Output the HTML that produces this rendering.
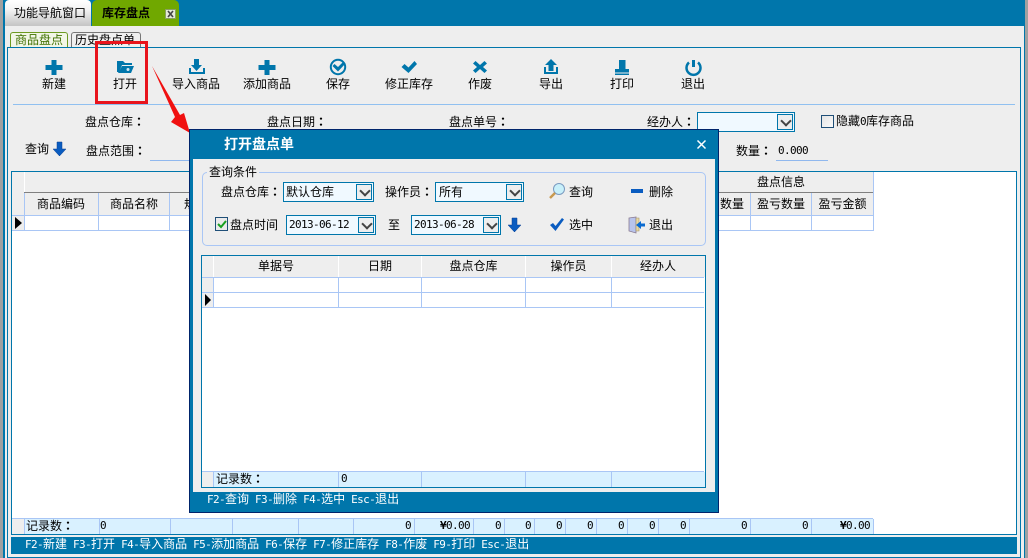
<!DOCTYPE html>
<html><head><meta charset="utf-8"><style>
html,body{margin:0;padding:0;width:1028px;height:558px;overflow:hidden;background:#eee}
*{box-sizing:border-box}
body{position:relative;font:12px/12px "WenQuanYi Zen Hei","Noto Sans CJK SC",sans-serif;color:#000}
div,svg{position:absolute}
.t{white-space:pre;height:12px}
.c{text-align:center}
.r{text-align:right}
.g{background:#a9c6f5}
.bl{background:#0076ab}
.w{color:#fff}
.m{font:11px/12px "DejaVu Sans Mono","Liberation Mono",monospace;letter-spacing:-.62px}
.k{font-family:"Noto Sans CJK TC","WenQuanYi Zen Hei",sans-serif;font-weight:bold}
.cb{border:1px solid #0076ab;background:#f0f9ff;height:20px}
.bt{right:1px;top:1px;width:16px;height:16px;background:#eee;border:1px solid #0076ab}
.bt::after{content:"";position:absolute;left:4px;top:2px;width:6px;height:6px;border:solid #444;border-width:0 2px 2px 0;transform:rotate(45deg)}
</style></head><body>
<div style="left:0;top:0;width:3px;height:558px;background:#a0a0a0"></div>
<div style="left:1025px;top:0;width:3px;height:558px;background:#a0a0a0"></div>
<div class="bl" style="left:3px;top:0;width:1022px;height:26px"></div>
<div class="bl" style="left:3px;top:0;width:2px;height:558px"></div>
<div class="bl" style="left:1024px;top:0;width:1px;height:558px"></div>
<div style="left:5px;top:0;width:86px;height:26px;background:linear-gradient(#fff,#f4f4f4 35%,#c4c4c4);border-radius:4px 4px 0 0"></div>
<div class="t" style="left:14px;top:7px">功能导航窗口</div>
<div style="left:92px;top:0;width:87px;height:26px;background:#70a800;border-radius:5px 5px 0 0"></div>
<div class="t" style="left:102px;top:7px;font-weight:bold">库存盘点</div>
<div style="left:165px;top:9px;width:11px;height:10px;background:#e4ead8;border:1px solid #8aa060"></div>
<svg style="left:165px;top:9px" width="11" height="10"><path d="M3 2L8 8M8 2L3 8" stroke="#444" stroke-width="1.6"/></svg>

<div style="left:10px;top:32px;width:58px;height:16px;background:#f2f6e6;border:1px solid #6c9a20;border-bottom:0;border-radius:3px 3px 0 0"></div>
<div class="t" style="left:15px;top:34px;color:#3f7000">商品盘点</div>
<div style="left:71px;top:32px;width:70px;height:15px;background:#f0f0f0;border:1px solid #777;border-bottom:0;border-radius:3px 3px 0 0"></div>
<div class="t" style="left:75px;top:34px">历史盘点单</div>

<div style="left:7px;top:47px;width:1014px;height:511px;border:1px solid #0076ab"></div>
<div style="left:13px;top:104px;width:1002px;height:1px;background:#90c0f0"></div>

<svg style="left:0;top:0" width="1028" height="110" fill="#0076ab">
<path d="M51.500 60h5v5h6v5h-6v5h-5v-5h-6v-5h6z"/>
<path d="M117 63v-2h6l2 2h7v2h-10l-3 7h-2z"/><path d="M122 66h12l-3 7h-13z"/><circle cx="128" cy="69.500" r="1.500" fill="#cfe6f2"/>
<path d="M194 59h5v6h3l-5.500 6-5.500-6h3zM189 68h2v4h12v-4h2v6h-16z"/>
<path d="M264.500 60h5v5h6v5h-6v5h-5v-5h-6v-5h6z"/>
<circle cx="338" cy="67" r="7.200" fill="none" stroke="#0076ab" stroke-width="2"/><path d="M332.500 66l2-2 3.500 3 5.500-5.500 2 2-7.500 8z"/>
<path d="M401.500 67l3-3 4 3.500 6-6.500 2.500 3-8.500 9z"/>
<path d="M473 63.500l2.500-2.500 4.500 4 4.500-4 2.500 2.500-4 3.500 4 3.500-2.500 2.500-4.500-4-4.500 4-2.500-2.500 4-3.500z"/>
<path d="M551 59l6 6h-3.500v6h-5v-6h-3.500zM544 67h2v5h10v-5h2v7h-14z"/>
<path d="M619 60h6.500v9h-6.500zM615 69h14v3.500h-14zM615 73.500h14v1.500h-14z"/>
<path d="M692 60h3v7h-3z"/><path d="M689 62.500a7 7 0 1 0 9 0" fill="none" stroke="#0076ab" stroke-width="2.500"/>
</svg>
<div class="t c" style="left:34px;top:78px;width:40px">新建</div>
<div class="t c" style="left:105px;top:78px;width:40px">打开</div>
<div class="t c" style="left:166px;top:78px;width:60px">导入商品</div>
<div class="t c" style="left:237px;top:78px;width:60px">添加商品</div>
<div class="t c" style="left:318px;top:78px;width:40px">保存</div>
<div class="t c" style="left:379px;top:78px;width:60px">修正库存</div>
<div class="t c" style="left:460px;top:78px;width:40px">作废</div>
<div class="t c" style="left:531px;top:78px;width:40px">导出</div>
<div class="t c" style="left:602px;top:78px;width:40px">打印</div>
<div class="t c" style="left:673px;top:78px;width:40px">退出</div>

<div class="t" style="left:85px;top:116px">盘点仓库<span class="k">：</span></div>
<div class="t" style="left:267px;top:116px">盘点日期<span class="k">：</span></div>
<div class="t" style="left:449px;top:116px">盘点单号<span class="k">：</span></div>
<div class="t" style="left:647px;top:116px">经办人<span class="k">：</span></div>
<div class="cb" style="left:697px;top:112px;width:98px"><div class="bt"></div></div>
<div style="left:821px;top:115px;width:13px;height:13px;border:1px solid #1f4f78;background:linear-gradient(135deg,#e4e4e4,#fafafa)"></div>
<div class="t" style="left:836px;top:115px">隐藏<span class="m">0</span>库存商品</div>
<div class="t" style="left:25px;top:143px">查询</div>
<svg style="left:53px;top:141px" width="14" height="16"><path d="M4 1h5v7h4l-6.500 7L0 8h4z" fill="#0a5cc0" stroke="#0a3f90" stroke-width=".5"/></svg>
<div class="t" style="left:86px;top:145px">盘点范围<span class="k">：</span></div>
<div style="left:150px;top:160px;width:40px;height:1px;background:#90b8ee"></div>
<div class="t" style="left:736px;top:145px">数量<span class="k">：</span></div>
<div class="t m" style="left:778px;top:145px">0.000</div>
<div style="left:776px;top:160px;width:52px;height:1px;background:#90b8ee"></div>

<!-- main grid -->
<div style="left:11px;top:171px;width:1006px;height:364px;background:#fff;border:1px solid #0076ab"></div>
<div style="left:12px;top:172px;width:861px;height:43px;background:#eee"></div>
<div style="left:12px;top:172px;width:12px;height:58px;background:#eee"></div>
<div style="left:24px;top:172px;width:1px;height:43px;background:#fff"></div>
<div style="left:24px;top:192px;width:849px;height:1px;background:#808080"></div>
<div class="g" style="left:12px;top:215px;width:861px;height:1px"></div>
<div class="g" style="left:12px;top:230px;width:861px;height:1px"></div>
<div class="g" style="left:24px;top:193px;width:1px;height:38px"></div>
<div class="g" style="left:98px;top:193px;width:1px;height:38px"></div>
<div class="g" style="left:169px;top:193px;width:1px;height:38px"></div>
<div class="g" style="left:750px;top:193px;width:1px;height:38px"></div>
<div class="g" style="left:811px;top:193px;width:1px;height:38px"></div>
<div class="g" style="left:873px;top:172px;width:1px;height:59px"></div>
<svg style="left:15px;top:216px" width="8" height="14"><path d="M0 1l7 6-7 6z"/></svg>
<div class="t c" style="left:24px;top:198px;width:74px">商品编码</div>
<div class="t c" style="left:99px;top:198px;width:70px">商品名称</div>
<div class="t" style="left:184px;top:198px">规格</div>
<div class="t c" style="left:689px;top:176px;width:184px">盘点信息</div>
<div class="t" style="left:720px;top:198px">数量</div>
<div class="t c" style="left:751px;top:198px;width:60px">盈亏数量</div>
<div class="t c" style="left:812px;top:198px;width:61px">盈亏金额</div>

<!-- main footer -->
<div style="left:12px;top:519px;width:12px;height:15px;background:#eee"></div>
<div style="left:24px;top:519px;width:849px;height:15px;background:#d9f1ff"></div>
<div class="g" style="left:12px;top:518px;width:861px;height:1px"></div>
<div class="g" style="left:24px;top:519px;width:1px;height:15px"></div>
<div class="g" style="left:99px;top:519px;width:1px;height:15px"></div>
<div class="g" style="left:170px;top:519px;width:1px;height:15px"></div>
<div class="g" style="left:232px;top:519px;width:1px;height:15px"></div>
<div class="g" style="left:298px;top:519px;width:1px;height:15px"></div>
<div class="g" style="left:353px;top:519px;width:1px;height:15px"></div>
<div class="g" style="left:414px;top:519px;width:1px;height:15px"></div>
<div class="g" style="left:473px;top:519px;width:1px;height:15px"></div>
<div class="g" style="left:504px;top:519px;width:1px;height:15px"></div>
<div class="g" style="left:534px;top:519px;width:1px;height:15px"></div>
<div class="g" style="left:565px;top:519px;width:1px;height:15px"></div>
<div class="g" style="left:596px;top:519px;width:1px;height:15px"></div>
<div class="g" style="left:627px;top:519px;width:1px;height:15px"></div>
<div class="g" style="left:658px;top:519px;width:1px;height:15px"></div>
<div class="g" style="left:689px;top:519px;width:1px;height:15px"></div>
<div class="g" style="left:750px;top:519px;width:1px;height:15px"></div>
<div class="g" style="left:811px;top:519px;width:1px;height:15px"></div>
<div class="g" style="left:873px;top:519px;width:1px;height:15px"></div>
<div class="t" style="left:26px;top:520px">记录数<span class="k">：</span></div>
<div class="t m" style="left:100px;top:520px">0</div>
<div class="t m r" style="left:350px;top:520px;width:61px">0</div>
<div class="t m r" style="left:420px;top:520px;width:50px"><b>¥</b>0.00</div>
<div class="t m r" style="left:480px;top:520px;width:21px">0</div>
<div class="t m r" style="left:510px;top:520px;width:21px">0</div>
<div class="t m r" style="left:541px;top:520px;width:21px">0</div>
<div class="t m r" style="left:572px;top:520px;width:21px">0</div>
<div class="t m r" style="left:603px;top:520px;width:21px">0</div>
<div class="t m r" style="left:634px;top:520px;width:21px">0</div>
<div class="t m r" style="left:665px;top:520px;width:21px">0</div>
<div class="t m r" style="left:700px;top:520px;width:47px">0</div>
<div class="t m r" style="left:760px;top:520px;width:48px">0</div>
<div class="t m r" style="left:820px;top:520px;width:50px"><b>¥</b>0.00</div>

<div class="bl" style="left:11px;top:537px;width:1006px;height:17px"></div>
<div class="t w" style="left:25px;top:538px"><span class="m">F2-</span>新建<span class="m"> F3-</span>打开<span class="m"> F4-</span>导入商品<span class="m"> F5-</span>添加商品<span class="m"> F6-</span>保存<span class="m"> F7-</span>修正库存<span class="m"> F8-</span>作废<span class="m"> F9-</span>打印<span class="m"> Esc-</span>退出</div>

<!-- red annotations -->
<div style="left:95px;top:41px;width:53px;height:63px;border:3px solid #e8141c"></div>
<svg style="left:150px;top:64px" width="45" height="75"><path d="M2 2L30 51l4-2 6 20-19-11 4-5z" fill="#f01010"/></svg>

<!-- dialog -->
<div class="bl" style="left:189px;top:129px;width:530px;height:384px;border:1px solid #00246b"></div>
<div style="left:193px;top:159px;width:522px;height:333px;background:#eee"></div>
<div class="t w" style="left:224px;top:137px;font-size:14px;line-height:14px;height:14px;font-weight:bold">打开盘点单</div>
<svg style="left:696px;top:139px" width="11" height="11"><path d="M1.500 1.500L9.500 9.500M9.500 1.500L1.500 9.500" stroke="#fff" stroke-width="1.500"/></svg>

<div style="left:202px;top:172px;width:504px;height:74px;border:1px solid #a9c6f5;border-radius:5px"></div>
<div class="t" style="left:207px;top:166px;background:#eee;padding:0 2px">查询条件</div>
<div class="t" style="left:221px;top:186px">盘点仓库<span class="k">：</span></div>
<div class="cb" style="left:283px;top:182px;width:91px"><div class="bt"></div><div class="t" style="left:2px;top:3px">默认仓库</div></div>
<div class="t" style="left:385px;top:186px">操作员<span class="k">：</span></div>
<div class="cb" style="left:435px;top:182px;width:89px"><div class="bt"></div><div class="t" style="left:3px;top:3px">所有</div></div>
<div style="left:215px;top:217px;width:13px;height:14px;border:1px solid #1f4f78;background:#eaeaea"></div>
<svg style="left:215px;top:217px" width="13" height="14"><path d="M3 7l3 3 5-6" fill="none" stroke="#18a020" stroke-width="2"/></svg>
<div class="t" style="left:230px;top:219px">盘点时间</div>
<div class="cb" style="left:286px;top:215px;width:90px"><div class="bt"></div><div class="t m" style="left:2px;top:3px">2013-06-12</div></div>
<div class="t" style="left:388px;top:219px">至</div>
<div class="cb" style="left:411px;top:215px;width:90px"><div class="bt"></div><div class="t m" style="left:2px;top:3px">2013-06-28</div></div>
<svg style="left:508px;top:217px" width="14" height="16"><path d="M4 1h5v7h4l-6.500 7L0 8h4z" fill="#0a5cc0" stroke="#0a3f90" stroke-width=".5"/></svg>

<svg style="left:548px;top:182px" width="20" height="18"><circle cx="11" cy="7" r="5.500" fill="#c8f0fa" stroke="#7a9ac0"/><path d="M7 11L2 16" stroke="#c89a50" stroke-width="2.500"/></svg>
<div class="t" style="left:569px;top:186px">查询</div>
<div style="left:631px;top:189px;width:12px;height:4px;background:#0a5cc0"></div>
<div class="t" style="left:649px;top:186px">删除</div>
<svg style="left:549px;top:217px" width="16" height="16"><path d="M1 8l3-2 2.500 3L13 1l2 1.500L6.500 14z" fill="#0a5cc0"/></svg>
<div class="t" style="left:569px;top:219px">选中</div>
<svg style="left:628px;top:216px" width="18" height="18"><path d="M1 2l7-1v16l-7-2z" fill="#b8c4ec" stroke="#8a7a90" stroke-width=".8"/><path d="M8 2h3v13H8z" fill="#e8d8a0" stroke="#a09070" stroke-width=".6"/><path d="M8 9l5-4v2.500h4v3h-4V13z" fill="#0a6ad0"/></svg>
<div class="t" style="left:649px;top:219px">退出</div>

<!-- dialog grid -->
<div style="left:201px;top:255px;width:505px;height:233px;background:#fff;border:1px solid #0076ab"></div>
<div style="left:202px;top:256px;width:503px;height:21px;background:#eee"></div>
<div style="left:202px;top:277px;width:12px;height:30px;background:#eee"></div>
<div class="g" style="left:202px;top:277px;width:502px;height:1px"></div>
<div class="g" style="left:202px;top:292px;width:502px;height:1px"></div>
<div class="g" style="left:202px;top:307px;width:502px;height:1px"></div>
<div class="g" style="left:213px;top:277px;width:1px;height:31px"></div>
<div class="g" style="left:338px;top:277px;width:1px;height:31px"></div>
<div class="g" style="left:421px;top:277px;width:1px;height:31px"></div>
<div class="g" style="left:525px;top:277px;width:1px;height:31px"></div>
<div class="g" style="left:611px;top:277px;width:1px;height:31px"></div>
<div style="left:213px;top:256px;width:1px;height:21px;background:#fff"></div>
<div style="left:338px;top:256px;width:1px;height:21px;background:#fff"></div>
<div style="left:421px;top:256px;width:1px;height:21px;background:#fff"></div>
<div style="left:525px;top:256px;width:1px;height:21px;background:#fff"></div>
<div style="left:611px;top:256px;width:1px;height:21px;background:#fff"></div>
<svg style="left:205px;top:293px" width="8" height="14"><path d="M0 1l6 6-6 6z"/></svg>
<div class="t c" style="left:214px;top:260px;width:124px">单据号</div>
<div class="t c" style="left:339px;top:260px;width:82px">日期</div>
<div class="t c" style="left:422px;top:260px;width:103px">盘点仓库</div>
<div class="t c" style="left:526px;top:260px;width:85px">操作员</div>
<div class="t c" style="left:612px;top:260px;width:92px">经办人</div>
<div style="left:202px;top:472px;width:12px;height:15px;background:#eee"></div>
<div style="left:214px;top:472px;width:491px;height:15px;background:#d9f1ff"></div>
<div class="g" style="left:202px;top:471px;width:502px;height:1px"></div>
<div class="g" style="left:213px;top:472px;width:1px;height:15px"></div>
<div class="g" style="left:338px;top:472px;width:1px;height:15px"></div>
<div class="g" style="left:421px;top:472px;width:1px;height:15px"></div>
<div class="g" style="left:525px;top:472px;width:1px;height:15px"></div>
<div class="g" style="left:611px;top:472px;width:1px;height:15px"></div>
<div class="t" style="left:216px;top:473px">记录数<span class="k">：</span></div>
<div class="t m" style="left:341px;top:473px">0</div>
<div class="t w" style="left:207px;top:493px"><span class="m">F2-</span>查询<span class="m"> F3-</span>删除<span class="m"> F4-</span>选中<span class="m"> Esc-</span>退出</div>
</body></html>
